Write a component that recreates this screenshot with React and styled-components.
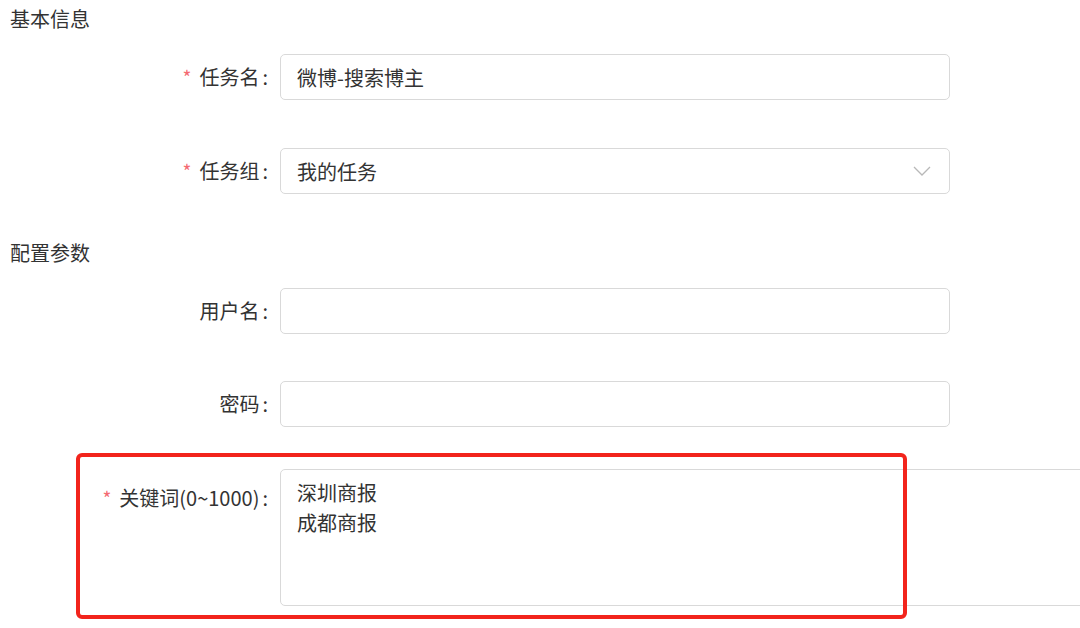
import React from "react";
import styled, { createGlobalStyle } from "styled-components";

const GlobalStyle = createGlobalStyle`
  body {
    margin: 0;
    background: #ffffff;
    overflow: hidden;
    font-family: "Noto Sans CJK SC", "Noto Sans", sans-serif;
  }
`;

function App() {
  return (
    <Page>
      <GlobalStyle />
      <SectionTitle>基本信息</SectionTitle>
      <FormItem $mb={48}>
        <Label>
          <Required>*</Required>任务名<Colon>:</Colon>
        </Label>
        <TextInput type="text" defaultValue="微博-搜索博主" />
      </FormItem>
      <FormItem $mb={40}>
        <Label>
          <Required>*</Required>任务组<Colon>:</Colon>
        </Label>
        <SelectBox>
          <span>我的任务</span>
          <Chevron width="18" height="10" viewBox="0 0 18 10">
            <polyline points="1,1 9,9 17,1" />
          </Chevron>
        </SelectBox>
      </FormItem>

      <SectionTitle>配置参数</SectionTitle>
      <FormItem $mb={47}>
        <Label>
          用户名<Colon>:</Colon>
        </Label>
        <TextInput type="text" />
      </FormItem>
      <FormItem $mb={42}>
        <Label>
          密码<Colon>:</Colon>
        </Label>
        <TextInput type="password" />
      </FormItem>
      <AnnotatedItem>
        <Label $top={6}>
          <Required>*</Required>关键词(0~1000)<Colon>:</Colon>
        </Label>
        <KeywordArea defaultValue={"深圳商报\n成都商报"} />
        <Highlight />
      </AnnotatedItem>
    </Page>
  );
}

export default App;

const Page = styled.div`
  width: 1080px;
  height: 628px;
  overflow: hidden;
  color: #333333;
`;

const SectionTitle = styled.div`
  height: 38px;
  line-height: 38px;
  padding-left: 10px;
  margin-bottom: 16px;
  font-size: 20px;
  color: #333333;
`;

const FormItem = styled.div`
  display: flex;
  align-items: center;
  height: 46px;
  margin-bottom: ${(p) => p.$mb || 47}px;
`;

const AnnotatedItem = styled.div`
  position: relative;
  display: flex;
  align-items: flex-start;
`;

const Label = styled.label`
  width: 268px;
  flex: 0 0 268px;
  margin-right: 12px;
  margin-top: ${(p) => p.$top || 0}px;
  line-height: 46px;
  text-align: right;
  font-size: 20px;
  color: #333333;
  white-space: nowrap;
`;

const Required = styled.span`
  color: #f46a72;
  font-size: 19px;
  margin-right: 8px;
`;

const Colon = styled.span`
  margin-left: 3px;
`;

const fieldBase = `
  box-sizing: border-box;
  border: 1px solid #d9d9d9;
  border-radius: 5px;
  background: #ffffff;
  font-family: "Noto Sans CJK SC", "Noto Sans", sans-serif;
  font-size: 20px;
  color: #333333;
  outline: none;
`;

const TextInput = styled.input`
  ${fieldBase}
  width: 670px;
  height: 46px;
  padding: 0 16px;
`;

const SelectBox = styled.div`
  ${fieldBase}
  width: 670px;
  height: 46px;
  padding: 0 16px 0 16px;
  display: flex;
  align-items: center;
  justify-content: space-between;
`;

const Chevron = styled.svg`
  fill: none;
  stroke: #b8b8b8;
  stroke-width: 1.3;
  margin-right: 2px;
`;

const KeywordArea = styled.textarea`
  ${fieldBase}
  width: 900px;
  flex: 0 0 900px;
  height: 137px;
  padding: 8px 16px;
  line-height: 30px;
  resize: none;
`;

const Highlight = styled.div`
  position: absolute;
  left: 76px;
  top: -16px;
  width: 831px;
  height: 166px;
  box-sizing: border-box;
  border: 4px solid #f2241c;
  border-radius: 6px;
  pointer-events: none;
`;
